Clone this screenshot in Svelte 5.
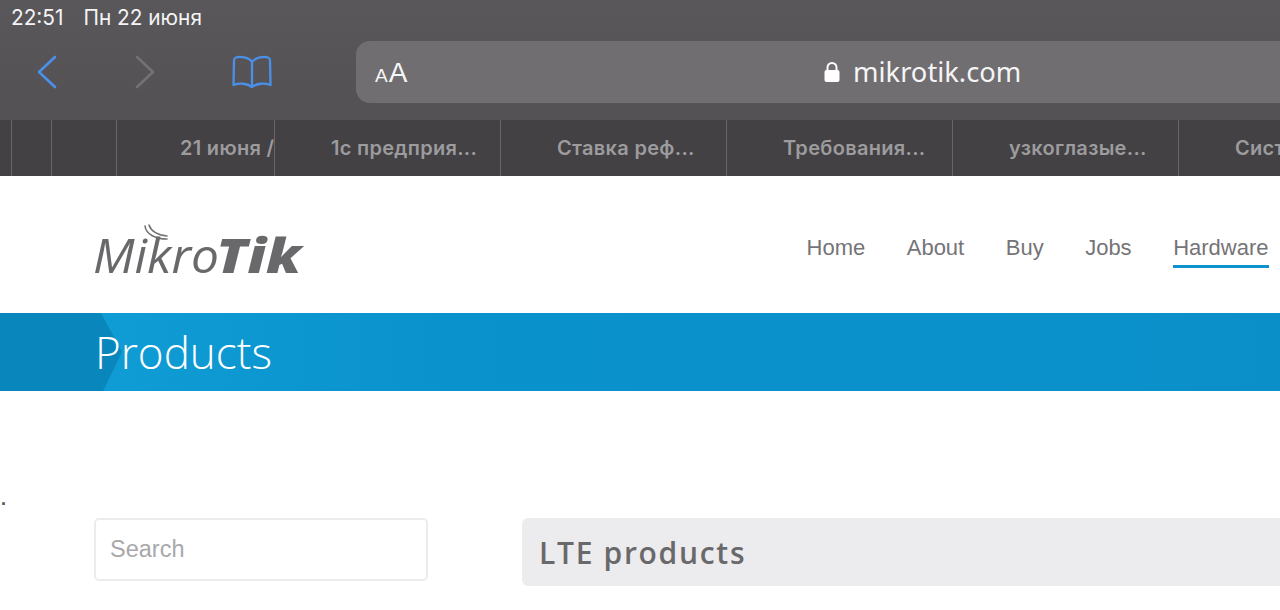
<script>
  const tabs = [
    { label: '', w: 12 },
    { label: '', w: 40 },
    { label: '', w: 65 },
    { label: '21 июня /', w: 158, start: 63 },
    { label: '1с предприя...', w: 226, start: 56 },
    { label: 'Ставка реф...', w: 226, start: 56 },
    { label: 'Требования...', w: 226, start: 56 },
    { label: 'узкоглазые...', w: 226, start: 56 },
    { label: 'Система', w: 226, start: 56 }
  ];
  const nav = ['Home', 'About', 'Buy', 'Jobs', 'Hardware'];
</script>

<div class="page">
  <header class="chrome">
    <div class="status">
      <span>22:51</span>
      <span>Пн 22 июня</span>
    </div>
    <div class="toolbar">
      <svg class="ic back" width="24" height="36" viewBox="0 0 24 36" fill="none" aria-hidden="true">
        <path d="M20 3 L4 18 L20 33" stroke="#4a90e8" stroke-width="2.600" stroke-linecap="round" stroke-linejoin="round" />
      </svg>
      <svg class="ic fwd" width="24" height="36" viewBox="0 0 24 36" fill="none" aria-hidden="true">
        <path d="M4 3 L20 18 L4 33" stroke="#727174" stroke-width="2.600" stroke-linecap="round" stroke-linejoin="round" />
      </svg>
      <svg class="ic book" width="40" height="34" viewBox="0 0 40 34" fill="none" aria-hidden="true">
        <path d="M20 7 C17 2.500 8 0.800 3.500 2.800 C2.300 3.300 2 4.300 2 5.500 L1.500 30 C7 28 15 28 20 32 C25 28 33 28 38.500 30 L38 5.500 C38 4.300 37.700 3.300 36.500 2.800 C32 0.800 23 2.500 20 7 Z M20 7 V32" stroke="#4a90e8" stroke-width="2.300" stroke-linejoin="round" stroke-linecap="round" />
      </svg>
      <div class="address">
        <span class="aa"><small>A</small>A</span>
        <span class="url">
          <svg width="16" height="22" viewBox="0 0 16 22" aria-hidden="true">
            <path d="M3.500 10 V6.500 A4.500 4.500 0 0 1 12.500 6.500 V10" fill="none" stroke="#fff" stroke-width="2" />
            <rect x="0.500" y="9" width="15" height="12" rx="2" fill="#fff" />
          </svg>
          mikrotik.com
        </span>
      </div>
    </div>
  </header>

  <nav class="tabs">
    {#each tabs as t}
      <div class="tab" style="flex-basis:{t.w}px;padding-left:{t.start ?? 0}px"><span>{t.label}</span></div>
    {/each}
  </nav>

  <section class="site-head">
    <svg class="logo" width="210" height="60" viewBox="0 0 210 60" role="img" aria-label="MikroTik">
      <path d="M50 10 C51 18 60 23 72 23 M54 9 C56 15 63 19 72 20" fill="none" stroke="#737275" stroke-width="1.600" stroke-linecap="round" />
      <text class="mikro" x="-2" y="57" textLength="126" lengthAdjust="spacingAndGlyphs">Mikro</text>
      <text class="tik" x="121" y="57" textLength="85" lengthAdjust="spacingAndGlyphs">Tik</text>
    </svg>
    <ul class="menu">
      {#each nav as item}
        <li class:active={item === 'Hardware'}>{item}</li>
      {/each}
    </ul>
  </section>

  <section class="band">
    <div class="wedge"></div>
    <h1>Products</h1>
  </section>

  <div class="dot">.</div>

  <section class="content">
    <div class="search">Search</div>
    <h2 class="title">LTE products</h2>
  </section>
</div>

<style>
  :global(body) {
    margin: 0;
    background: #fff;
  }
  .page {
    width: 1280px;
    height: 610px;
    overflow: hidden;
    font-family: "Inter", "Liberation Sans", sans-serif;
  }
  .chrome {
    height: 120px;
    box-sizing: border-box;
    background: linear-gradient(#59575a, #535154);
    color: #fff;
  }
  .status {
    display: flex;
    gap: 20px;
    padding: 6px 0 0 11px;
    height: 41px;
    box-sizing: border-box;
    font-size: 20.800px;
    line-height: 23px;
    color: #f4f4f5;
  }
  .toolbar {
    display: flex;
    align-items: center;
    height: 62px;
  }
  .ic {
    flex: none;
  }
  .back {
    margin-left: 35px;
  }
  .fwd {
    margin-left: 74px;
  }
  .book {
    margin-left: 75px;
  }
  .address {
    margin-left: 84px;
    flex: none;
    width: 960px;
    height: 62px;
    border-radius: 14px 0 0 14px;
    background: #706e71;
    position: relative;
    display: flex;
    align-items: center;
  }
  .aa {
    margin-left: 19px;
    font-size: 28px;
    font-family: "Liberation Sans", sans-serif;
    color: #f6f6f6;
    line-height: 1;
    padding-top: 2px;
  }
  .aa small {
    font-size: 19px;
    margin-right: 1px;
  }
  .url {
    position: absolute;
    left: 468px;
    top: 14px;
    display: flex;
    align-items: center;
    gap: 13px;
    font-size: 27.300px;
    line-height: 34px;
    font-family: "Noto Sans", sans-serif;
    color: #f5f5f6;
    white-space: nowrap;
  }
  .tabs {
    display: flex;
    height: 56px;
    background: #434144;
    overflow: hidden;
    white-space: nowrap;
  }
  .tab {
    flex: none;
    box-sizing: border-box;
    border-right: 1px solid #68666a;
    display: flex;
    align-items: center;
    overflow: hidden;
    font-size: 20px;
    font-weight: 600;
    letter-spacing: 0.300px;
    color: #9c9b9d;
    font-family: "Inter", "Liberation Sans", sans-serif;
  }
  .site-head {
    height: 137px;
    display: flex;
    align-items: flex-start;
    justify-content: space-between;
    background: #fff;
    padding: 0 11.500px 0 95px;
  }
  .logo {
    margin-top: 40px;
    flex: none;
    overflow: visible;
  }
  .mikro {
    font-family: "Open Sans", sans-serif;
    font-weight: 400;
    font-style: italic;
    font-size: 47px;
    fill: #69686b;
  }
  .tik {
    font-family: "Open Sans", sans-serif;
    font-weight: 800;
    font-style: italic;
    font-size: 47px;
    fill: #69686b;
  }
  .menu {
    display: flex;
    gap: 41.500px;
    list-style: none;
    margin: 0;
    padding: 0;
    font-family: "Liberation Sans", sans-serif;
    font-size: 22px;
    color: #757477;
  }
  .menu li {
    margin-top: 58px;
    height: 28px;
    line-height: 27px;
    padding-bottom: 3px;
  }
  .menu li.active {
    border-bottom: 3px solid #1093cc;
  }
  .band {
    height: 78px;
    position: relative;
    background: linear-gradient(90deg, #0f9bd4 10%, #0a92cc 35%, #0a8fc9);
    overflow: hidden;
  }
  .wedge {
    position: absolute;
    inset: 0 auto 0 0;
    width: 122px;
    background: #0986bc;
    clip-path: polygon(0 0, 101px 0, 122px 39px, 103px 78px, 0 78px);
  }
  h1 {
    position: relative;
    margin: 0;
    padding-left: 95px;
    font-family: "Open Sans", sans-serif;
    font-weight: 300;
    font-size: 44px;
    line-height: 78px;
    color: #fff;
  }
  .dot {
    height: 127px;
    padding-left: 1px;
    box-sizing: border-box;
    padding-top: 98px;
    font-size: 18px;
    font-weight: 700;
    line-height: 20px;
    color: #555;
    font-family: "Liberation Sans", sans-serif;
  }
  .content {
    display: flex;
    align-items: flex-start;
    padding-left: 94px;
  }
  .search {
    width: 334px;
    height: 63px;
    box-sizing: border-box;
    border: 2px solid #ececee;
    border-radius: 5px;
    padding-left: 14px;
    font-family: "Liberation Sans", sans-serif;
    font-size: 23.500px;
    line-height: 58px;
    color: #a8a8aa;
  }
  .title {
    margin: 0 0 0 94px;
    flex: 1;
    height: 68px;
    box-sizing: border-box;
    padding-left: 17px;
    border-radius: 6px 0 0 6px;
    background: #ecebed;
    font-family: "Open Sans", sans-serif;
    font-weight: 550;
    font-size: 30px;
    line-height: 70px;
    letter-spacing: 1.700px;
    color: #69686b;
  }
</style>
